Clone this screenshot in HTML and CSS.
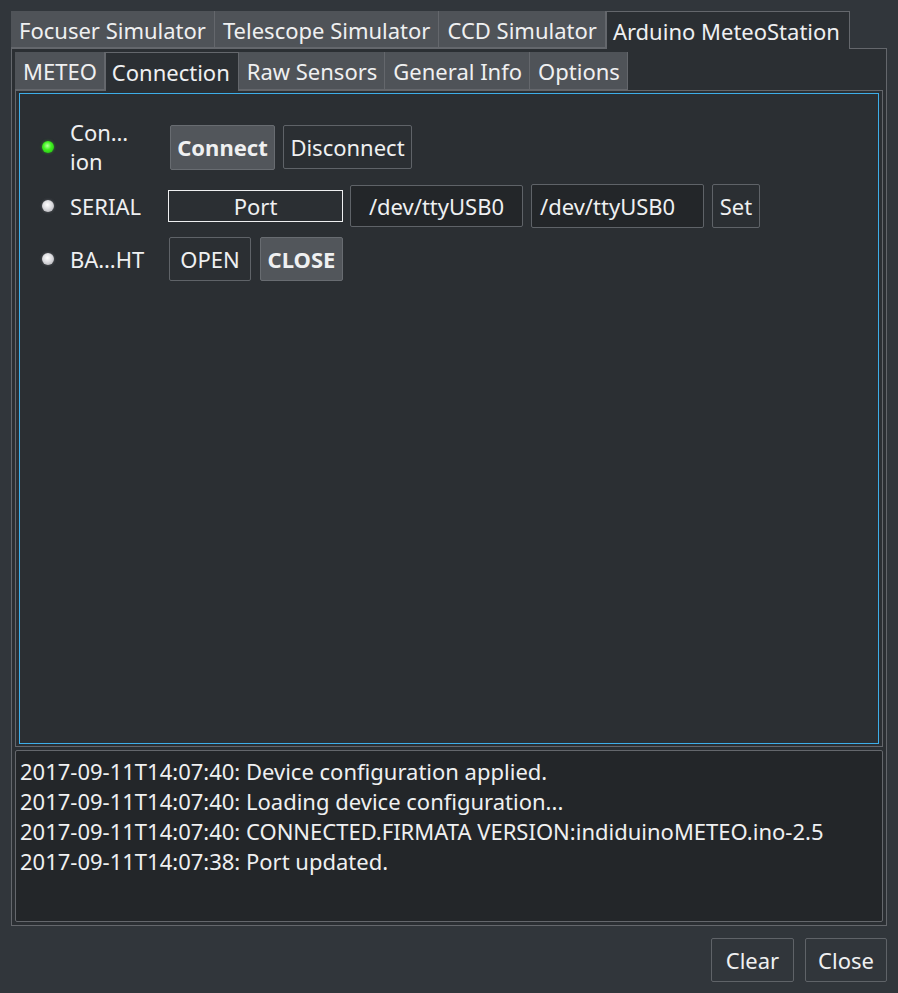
FILE: index.html
```html
<!DOCTYPE html>
<html>
<head>
<meta charset="utf-8">
<link rel="stylesheet" href="styles.css">
</head>
<body>
<div class="dialog">
  <div class="otabs">
    <div class="otab">Focuser Simulator</div>
    <div class="otab">Telescope Simulator</div>
    <div class="otab">CCD Simulator</div>
    <div class="otab sel">Arduino MeteoStation</div>
  </div>
  <div class="opane">
    <div class="itabs">
      <div class="itab">METEO</div>
      <div class="itab sel">Connection</div>
      <div class="itab">Raw Sensors</div>
      <div class="itab">General Info</div>
      <div class="itab">Options</div>
    </div>
    <div class="ipane">
      <div class="focus">
        <div class="row row1">
          <span class="led green"></span>
          <span class="label l1">Con…<br>ion</span>
          <button class="btn on b-connect">Connect</button>
          <button class="btn b-disconnect">Disconnect</button>
        </div>
        <div class="row row2">
          <span class="led grey"></span>
          <span class="label l2">SERIAL</span>
          <span class="portbox">Port</span>
          <span class="field f1">/dev/ttyUSB0</span>
          <span class="field f2">/dev/ttyUSB0</span>
          <button class="btn b-set">Set</button>
        </div>
        <div class="row row3">
          <span class="led grey"></span>
          <span class="label l3">BA…HT</span>
          <button class="btn b-open">OPEN</button>
          <button class="btn on b-close">CLOSE</button>
        </div>
      </div>
    </div>
    <div class="log">
      <div>2017-09-11T14:07:40: Device configuration applied.</div>
      <div>2017-09-11T14:07:40: Loading device configuration...</div>
      <div>2017-09-11T14:07:40: CONNECTED.FIRMATA VERSION:indiduinoMETEO.ino-2.5</div>
      <div>2017-09-11T14:07:38: Port updated.</div>
    </div>
  </div>
  <div class="footer">
    <button class="btn fbtn">Clear</button>
    <button class="btn fbtn">Close</button>
  </div>
</div>
</body>
</html>
```
FILE: styles.css
```css
html, body {
  margin: 0;
  padding: 0;
  background: #31363b;
}
body {
  width: 898px;
  height: 993px;
  overflow: hidden;
  font-family: "Noto Sans", "Open Sans", sans-serif;
  font-size: 22px;
  color: #eff0f1;
}
.dialog {
  padding: 11px 11px 0 11px;
}
.otabs {
  display: flex;
  height: 37px;
}
.otab {
  box-sizing: border-box;
  height: 37px;
  line-height: 38px;
  padding: 0 8px 0 8px;
  background: #4f5358;
  border-right: 1px solid #64676c;
  border-bottom: 1px solid #64676c;
  white-space: nowrap;
}
.otab.sel {
  position: relative;
  z-index: 2;
  height: 38px;
  margin-bottom: -1px;
  background: #2b2f33;
  border: 1px solid #64676c;
  border-bottom: none;
  padding: 0 9px 0 6px;
}
.opane {
  box-sizing: border-box;
  height: 878px;
  border: 1px solid #64676c;
  background: #2b2f33;
  padding: 3px;
  display: flex;
  flex-direction: column;
}
.itabs {
  display: flex;
  height: 38px;
}
.itab {
  box-sizing: border-box;
  height: 38px;
  line-height: 38px;
  padding: 0 7px 0 8px;
  background: #4f5358;
  border-right: 1px solid #64676c;
  border-bottom: 1px solid #64676c;
  white-space: nowrap;
}
.itab.sel {
  position: relative;
  z-index: 2;
  height: 39px;
  margin-bottom: -1px;
  background: #2b2f33;
  border: 1px solid #64676c;
  border-bottom: none;
  padding: 0 8px 0 6px;
}
.ipane {
  box-sizing: border-box;
  height: 657px;
  border: 1px solid #64676c;
  padding: 2px 3px 2px 3px;
  display: flex;
}
.focus {
  flex: 1;
  border: 1px solid #3daee9;
  padding: 24px 0 0 22px;
  display: flex;
  flex-direction: column;
  gap: 8px;
}
.row {
  display: flex;
  align-items: center;
}
.row1 { height: 58px; }
.row2 { height: 44px; }
.row3 { height: 44px; margin-top: 1px; }
.led {
  width: 12px;
  height: 12px;
  border-radius: 50%;
  flex: none;
  margin-right: 16px;
}
.led.green {
  background: radial-gradient(circle at 45% 40%, #b6ff9e 0%, #3ff21f 40%, #1fae10 100%);
  box-shadow: 0 0 3px rgba(60, 230, 40, 0.5);
}
.led.grey {
  background: radial-gradient(circle at 45% 40%, #ffffff 0%, #dcdce0 45%, #a3a3a8 100%);
  box-shadow: 0 0 3px rgba(200, 200, 205, 0.35);
}
.label {
  line-height: 29px;
  white-space: nowrap;
  flex: none;
}
.l1 { width: 100px; }
.l2 { width: 98px; }
.l3 { width: 99px; }
.btn {
  box-sizing: border-box;
  font-family: inherit;
  font-size: 22px;
  color: #eff0f1;
  background: #2b2f33;
  border: 1px solid #5f6368;
  border-radius: 2px;
  padding: 0;
  height: 44px;
  display: inline-flex;
  align-items: center;
  justify-content: center;
  flex: none;
}
.btn.on {
  background: #52565b;
  border-color: #686c71;
  font-weight: bold;
}
.b-connect { width: 105px; height: 45px; margin-right: 8px; }
.b-disconnect { width: 129px; }
.portbox {
  box-sizing: border-box;
  width: 175px;
  height: 32px;
  border: 1px solid #eff0f1;
  display: flex;
  align-items: center;
  justify-content: center;
  margin-right: 7px;
  flex: none;
}
.field {
  box-sizing: border-box;
  width: 173px;
  height: 43px;
  background: #232629;
  border: 1px solid #5f6368;
  border-radius: 2px;
  display: flex;
  align-items: center;
  flex: none;
}
.f1 { justify-content: center; margin-right: 8px; height: 42px; }
.f2 { padding-left: 8px; margin-right: 8px; height: 44px; }
.b-set { width: 48px; }
.b-open { width: 82px; margin-right: 9px; }
.b-close { width: 83px; }
.log {
  box-sizing: border-box;
  margin-top: 3px;
  height: 172px;
  background: #232629;
  border: 1px solid #64676c;
  border-radius: 2px;
  padding: 5px 4px;
  line-height: 30px;
  white-space: nowrap;
}
.footer {
  display: flex;
  justify-content: flex-end;
  gap: 11px;
  margin-top: 12px;
}
.fbtn {
  width: 83px;
  height: 44px;
  background: #31363b;
}
.fbtn:last-child { width: 82px; }
```
